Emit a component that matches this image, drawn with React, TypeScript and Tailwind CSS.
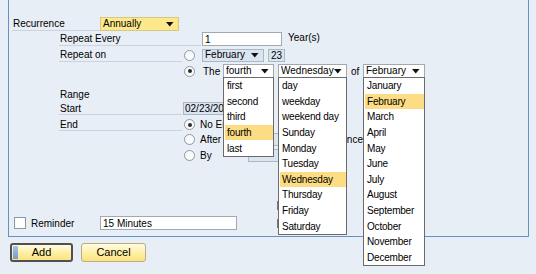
import React from 'react'

const Arrow = () => (
  <svg width="8" height="5" viewBox="0 0 8 5" className="shrink-0">
    <path d="M0 0h7.5L3.75 4.5z" fill="#111" />
  </svg>
)

function Select({ value, w, tone = 'white' }: { value: string; w: string; tone?: 'white' | 'yellow' | 'blue' }) {
  const skin =
    tone === 'yellow'
      ? 'bg-[#fde98c] border-[#d8c77e]'
      : tone === 'blue'
        ? 'bg-[#dbe5f0] border-[#a9b7c7]'
        : 'bg-white border-[#a3a9b1]'
  return (
    <div className={`${w} shrink-0 h-full flex items-center border pl-[2px] pr-[4px] ${skin}`}>
      <span className="flex-1 min-w-0 leading-none whitespace-nowrap overflow-hidden">{value}</span>
      <Arrow />
    </div>
  )
}

function Radio({ on = false }: { on?: boolean }) {
  return (
    <div className="w-[11px] h-[11px] rounded-full border border-[#8c98a6] bg-gradient-to-br from-[#f4f6f8] to-white flex items-center justify-center shrink-0">
      {on && <div className="w-[4px] h-[4px] rounded-full bg-[#2b2b2b]" />}
    </div>
  )
}

function ListBox({ items, selected }: { items: string[]; selected: string }) {
  return (
    <div className="absolute left-0 top-[13px] w-full z-20 bg-white border border-[#6b6b6b] overflow-hidden">
      {items.map((it) => (
        <div
          key={it}
          className={`h-[15.6px] flex items-center pl-[2px] ml-[1px] whitespace-nowrap tracking-[-0.2px] ${it === selected ? 'bg-[#fddd83]' : ''}`}
        >
          {it}
        </div>
      ))}
    </div>
  )
}

const months = ['January', 'February', 'March', 'April', 'May', 'June', 'July', 'August', 'September', 'October', 'November', 'December']
const days = ['day', 'weekday', 'weekend day', 'Sunday', 'Monday', 'Tuesday', 'Wednesday', 'Thursday', 'Friday', 'Saturday']
const ordinals = ['first', 'second', 'third', 'fourth', 'last']

export default function App() {
  return (
    <div className="w-[536px] h-[274px] bg-[#e8eef6] text-[10px] text-black font-['Liberation_Sans',Arial,sans-serif] overflow-hidden">
      {/* form frame, top edge runs off the window */}
      <div className="ml-[8px] w-[521px] h-[237px] border-x border-b border-[#6590c6] pt-[17px] flex flex-col">
        <div className="flex h-[14px] pl-[3px]">
          <div className="w-[88px] h-[14px] border-b border-[#cbd3dc] flex items-center pl-[1px]">Recurrence</div>
          <Select value="Annually" w="w-[79px]" tone="yellow" />
        </div>

        <div className="flex h-[14px] mt-[1px] pl-[50px] items-center">
          <div className="w-[142px] h-[14px] border-b border-[#cbd3dc] flex items-center pl-[1px]">Repeat Every</div>
          <div className="ml-[1px] w-[80px] h-[14px] bg-white border border-[#a3a9b1] flex items-center pl-[2px]">1</div>
          <span className="ml-[6px] -mt-[3px]">Year(s)</span>
        </div>

        <div className="flex h-[14px] mt-[2px] pl-[50px] items-center">
          <div className="w-[123px] h-[14px] border-b border-[#cbd3dc] flex items-center pl-[1px]">Repeat on</div>
          <div className="ml-[2px]"><Radio /></div>
          <div className="ml-[7px] h-[13px] flex">
            <Select value="February" w="w-[62px]" tone="blue" />
          </div>
          <div className="ml-[4px] w-[17px] h-[13px] bg-[#dbe5f0] border border-[#a9b7c7] flex items-center pl-[2px]">23</div>
        </div>

        <div className="flex h-[14px] mt-[2px] pl-[175px] items-center">
          <Radio on />
          <span className="ml-[8px] w-[20px] shrink-0">The</span>
          <div className="relative h-[14px] flex">
            <Select value="fourth" w="w-[51px]" />
            <ListBox items={ordinals} selected="fourth" />
          </div>
          <div className="relative ml-[4px] h-[14px] flex">
            <Select value="Wednesday" w="w-[69px]" />
            <ListBox items={days} selected="Wednesday" />
          </div>
          <span className="ml-[4px] w-[12px] shrink-0">of</span>
          <div className="relative h-[14px] flex">
            <Select value="February" w="w-[62px]" />
            <ListBox items={months} selected="February" />
          </div>
        </div>

        <div className="flex h-[13px] mt-[10px] pl-[51px] items-center">Range</div>

        <div className="flex h-[13px] mt-[1px] pl-[50px] items-center">
          <div className="w-[123px] h-[13px] border-b border-[#cbd3dc] flex items-center pl-[1px]">Start</div>
          <div className="ml-[1px] w-[60px] h-[13px] bg-[#dbe5f0] border border-[#a9b7c7] flex items-center pl-[1px] whitespace-nowrap overflow-hidden">02/23/2015</div>
        </div>

        <div className="flex h-[13px] mt-[3px] pl-[50px] items-center">
          <div className="w-[123px] h-[13px] border-b border-[#cbd3dc] flex items-center pl-[1px]">End</div>
          <div className="ml-[2px]"><Radio on /></div>
          <span className="ml-[5px] whitespace-nowrap">No End Date</span>
        </div>

        <div className="flex h-[13px] mt-[2px] pl-[175px] items-center">
          <Radio />
          <span className="ml-[5px] w-[48px] shrink-0">After</span>
          <div className="w-[42px] h-[13px] shrink-0 bg-[#dbe5f0] border border-[#a9b7c7]" />
          <span className="w-[73px] shrink-0 text-right whitespace-nowrap">Occurrence</span>
        </div>

        <div className="flex h-[13px] mt-[3px] pl-[175px] items-center">
          <Radio />
          <span className="ml-[5px] w-[48px] shrink-0">By</span>
          <div className="w-[60px] h-[13px] bg-[#dbe5f0] border border-[#a9b7c7]" />
        </div>

        <div className="relative flex h-[14px] mt-[54px] pl-[5px] items-center">
          <div className="w-[12px] h-[12px] shrink-0 bg-white border border-[#8c98a6]" />
          <span className="ml-[5px] w-[69px] shrink-0">Reminder</span>
          <div className="w-[137px] h-[14px] bg-white border border-[#a3a9b1] flex items-center pl-[2px]">15 Minutes</div>
          <div className="absolute left-[268px] top-[-15px] w-[1px] h-[9px] bg-[#6f7780]" />
          <div className="absolute left-[268px] top-[3px] w-[1px] h-[9px] bg-[#6f7780]" />
        </div>
      </div>

      <div className="flex mt-[6px] pl-[10px] gap-[8px]">
        <button className="relative w-[63px] h-[19px] rounded-[3px] border-2 border-[#505050] bg-gradient-to-b from-[#fffbe3] via-[#fff0a6] to-[#fde37f] text-[11px] leading-none flex items-center justify-center">
          <span className="absolute left-[1px] top-[1px] bottom-[1px] w-[5px] bg-gradient-to-b from-[#a8c4e8] to-[#6f9bd4]" />
          Add
        </button>
        <button className="w-[65px] h-[19px] rounded-[3px] border border-[#b8ad86] bg-gradient-to-b from-[#fffbe3] via-[#fff0a6] to-[#fde37f] text-[11px] leading-none flex items-center justify-center">
          Cancel
        </button>
      </div>
    </div>
  )
}
